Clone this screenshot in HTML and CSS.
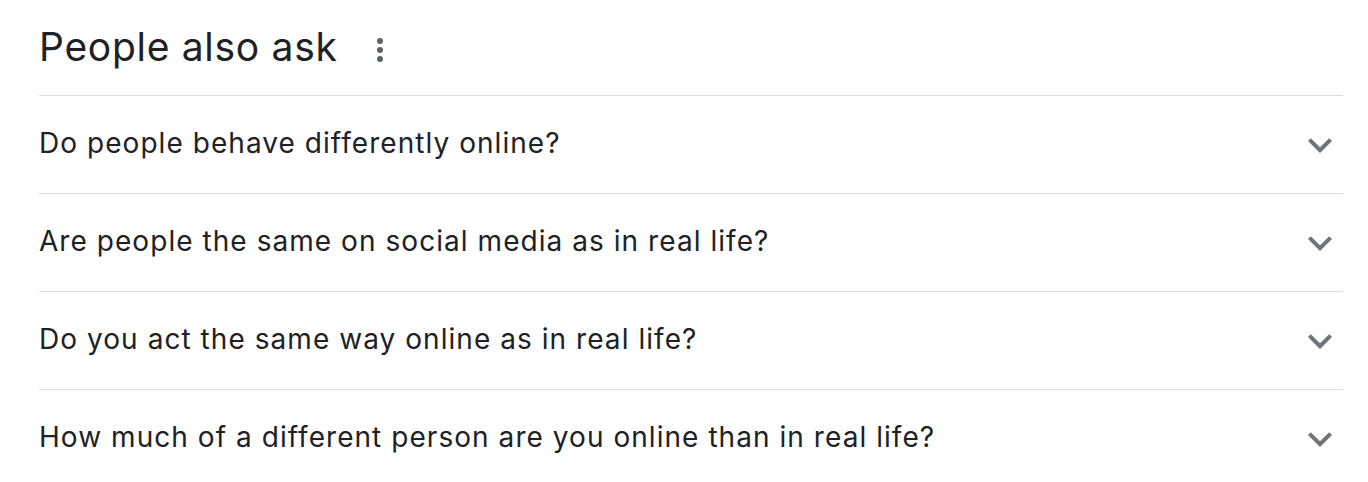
FILE: index.html
```html
<!DOCTYPE html>
<html>
<head>
<meta charset="utf-8">
<link rel="stylesheet" href="styles.css">
</head>
<body>
<div class="paa">
  <div class="paa-head">
    <h2 class="paa-title">People also ask</h2>
    <svg class="more" viewBox="0 0 24 24" width="36" height="36"><circle cx="12" cy="6" r="2"/><circle cx="12" cy="12" r="2"/><circle cx="12" cy="18" r="2"/></svg>
  </div>
  <div class="q"><span class="q-text">Do people behave differently online?</span><svg class="chev" viewBox="0 0 24 24" width="48" height="48"><path d="M7.41 8.59L12 13.17l4.59-4.58L18 10l-6 6-6-6 1.41-1.41z"/></svg></div>
  <div class="q"><span class="q-text">Are people the same on social media as in real life?</span><svg class="chev" viewBox="0 0 24 24" width="48" height="48"><path d="M7.41 8.59L12 13.17l4.59-4.58L18 10l-6 6-6-6 1.41-1.41z"/></svg></div>
  <div class="q"><span class="q-text">Do you act the same way online as in real life?</span><svg class="chev" viewBox="0 0 24 24" width="48" height="48"><path d="M7.41 8.59L12 13.17l4.59-4.58L18 10l-6 6-6-6 1.41-1.41z"/></svg></div>
  <div class="q"><span class="q-text">How much of a different person are you online than in real life?</span><svg class="chev" viewBox="0 0 24 24" width="48" height="48"><path d="M7.41 8.59L12 13.17l4.59-4.58L18 10l-6 6-6-6 1.41-1.41z"/></svg></div>
</div>
</body>
</html>
```
FILE: styles.css
```css
html, body { margin: 0; padding: 0; background: #fff; }
body { font-family: Inter, Roboto, sans-serif; color: #202124; }
.paa { padding: 0 25px 0 39px; }
.paa-head { height: 95px; display: flex; align-items: center; gap: 24px; }
.paa-title { margin: 0; font-size: 39px; font-weight: 400; line-height: 1; letter-spacing: 0.7px; padding-bottom: 2px; }
.more { fill: #5f6368; margin-top: 4px; }
.q { height: 97px; border-top: 1px solid #dadce0; display: flex; align-items: center; justify-content: space-between; }
.q-text { font-size: 28px; line-height: 1; letter-spacing: 1.05px; margin-top: -3px; }
.chev { fill: #70757a; margin-right: -1px; }
```
